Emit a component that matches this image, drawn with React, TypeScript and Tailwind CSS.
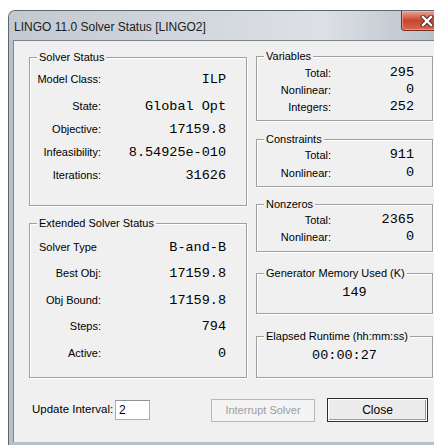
import type { ReactNode } from 'react';

const sans = "font-['Liberation_Sans',Arial,sans-serif]";
const mono = "font-['Liberation_Mono','Courier_New',monospace]";

type Row = { label: string; value: string; left?: boolean };

const solverRows: Row[] = [
    { label: 'Model Class:', value: 'ILP' },
    { label: 'State:', value: 'Global Opt' },
    { label: 'Objective:', value: '17159.8' },
    { label: 'Infeasibility:', value: '8.54925e-010' },
    { label: 'Iterations:', value: '31626' },
];

const extendedRows: Row[] = [
    { label: 'Solver Type', value: 'B-and-B', left: true },
    { label: 'Best Obj:', value: '17159.8' },
    { label: 'Obj Bound:', value: '17159.8' },
    { label: 'Steps:', value: '794' },
    { label: 'Active:', value: '0' },
];

// etched group box, same look as a win32 GROUPBOX
const Group = ({ title, className, children }: { title: string; className: string; children?: ReactNode }) => (
    <fieldset
        className={`border border-[#a0a0a0] shadow-[1px_1px_0_#ffffff,inset_1px_1px_0_#ffffff] ${className}`}
    >
        <legend className={`ml-[7px] px-[2px] bg-[#f0f0f0] text-[11px] leading-[12px] text-black whitespace-nowrap ${sans}`}>
            {title}
        </legend>
        {children}
    </fieldset>
);

const LeftRow = ({ row, h }: { row: Row; h: string }) => (
    <div className={`flex items-center pr-[20px] ${h}`}>
        <span
            className={`w-[71px] shrink-0 whitespace-nowrap text-[11px] leading-none text-black ${sans} ${row.left ? 'pl-[9px] text-left' : 'text-right'}`}
        >
            {row.label}
        </span>
        <span className={`flex-1 text-right whitespace-nowrap text-[13.5px] leading-none text-black ${mono}`}>{row.value}</span>
    </div>
);

const RightRow = ({ label, value, h }: { label: string; value: string; h: string }) => (
    <div className={`flex items-center pr-[18px] ${h}`}>
        <span className={`w-[74px] shrink-0 text-right whitespace-nowrap text-[11px] leading-none text-black ${sans}`}>{label}</span>
        <span className={`flex-1 text-right text-[13.5px] leading-none text-black ${mono}`}>{value}</span>
    </div>
);

const CloseGlyph = () => (
    <svg width="14" height="12" viewBox="0 0 14 12">
        <path d="M3 2 L11 10 M11 2 L3 10" stroke="#5a2a24" strokeWidth="4.4" strokeLinecap="square" />
        <path d="M3 2 L11 10 M11 2 L3 10" stroke="#ffffff" strokeWidth="2.4" strokeLinecap="square" />
    </svg>
);

export default function App() {
    return (
        <div className="w-[434px] h-[445px] overflow-hidden bg-white pt-[10px] pl-[8px]">
            <div className="w-[450px] h-[436px] flex flex-col rounded-tl-[7px] border-t border-l border-[#5d6670] bg-[#b8c0c9]">
                {/* caption */}
                <div className="h-[29px] flex items-start justify-between rounded-tl-[6px] bg-gradient-to-r from-[#c3c9d0] via-[#dde1e6] via-70% to-[#b3bac3]">
                    <span className={`pl-[5px] pt-[9px] text-[12px] leading-[14px] text-[#1b1b1b] ${sans}`}>
                        LINGO 11.0 Solver Status [LINGO2]
                    </span>
                    <div className="mr-[5px] w-[52px] h-[20px] flex items-center justify-center rounded-b-[4px] border border-t-0 border-[#7a2a20] bg-gradient-to-b from-[#e4a595] via-[#c9442f] to-[#d8674c] shadow-[inset_0_0_0_1px_rgba(255,200,190,0.5)]">
                        <CloseGlyph />
                    </div>
                </div>

                <div className="flex-1 flex pl-[4px]">
                    {/* client area */}
                    <div className="flex-1 h-[402px] flex flex-col border-t border-l border-[#7b848d] bg-[#f0f0f0]">
                        <div className="flex pl-[15px] pt-[9px]">
                            <div className="w-[218px] mt-[1px] flex flex-col">
                                <Group title="Solver Status" className="h-[155px] pt-[5px]">
                                    {solverRows.map((r, i) => (
                                        <LeftRow key={r.label} row={r} h={i === 1 ? 'h-[23px] mt-[4px]' : 'h-[23px]'} />
                                    ))}
                                </Group>
                                <Group title="Extended Solver Status" className="h-[161px] mt-[11px] pt-[5px]">
                                    {extendedRows.map((r) => (
                                        <LeftRow key={r.label} row={r} h="h-[26.5px]" />
                                    ))}
                                </Group>
                            </div>

                            <div className="w-[177px] ml-[9px] flex flex-col">
                                <Group title="Variables" className="h-[71px] pt-[2.5px]">
                                    <RightRow label="Total:" value="295" h="h-[17px]" />
                                    <RightRow label="Nonlinear:" value="0" h="h-[17px]" />
                                    <RightRow label="Integers:" value="252" h="h-[17px]" />
                                </Group>
                                <Group title="Constraints" className="h-[54px] mt-[12px] pt-[1px]">
                                    <RightRow label="Total:" value="911" h="h-[18px]" />
                                    <RightRow label="Nonlinear:" value="0" h="h-[18px]" />
                                </Group>
                                <Group title="Nonzeros" className="h-[54px] mt-[11px] pt-[1.5px]">
                                    <RightRow label="Total:" value="2365" h="h-[17px]" />
                                    <RightRow label="Nonlinear:" value="0" h="h-[17px]" />
                                </Group>
                                <Group title="Generator Memory Used (K)" className="h-[47px] mt-[15px] pt-[4px]">
                                    <div className={`h-[20px] flex items-center justify-center pl-[20px] text-[13.5px] leading-none text-black ${mono}`}>
                                        149
                                    </div>
                                </Group>
                                <Group title="Elapsed Runtime (hh:mm:ss)" className="h-[48px] mt-[16px] pt-[4px]">
                                    <div className={`h-[20px] flex items-center justify-center text-[13.5px] leading-none text-black ${mono}`}>
                                        00:00:27
                                    </div>
                                </Group>
                            </div>
                        </div>

                        {/* footer */}
                        <div className="mt-[20px] h-[24px] flex items-center pl-[18px]">
                            <span className={`w-[83px] text-[11.5px] leading-none text-black ${sans}`}>Update Interval:</span>
                            <div className={`w-[35px] h-[20px] flex items-center pl-[3px] border border-[#abadb3] border-t-[#8e9198] bg-white text-[12px] leading-none text-black ${sans}`}>
                                2
                            </div>
                            <div className={`ml-[61px] w-[104px] h-[23px] flex items-center justify-center border border-[#b5b8bc] bg-[#f4f4f4] text-[11px] leading-none text-[#9d9d9d] ${sans}`}>
                                Interrupt Solver
                            </div>
                            <div className={`ml-[12px] w-[101px] h-[24px] flex items-center justify-center border border-[#2e2e2e] bg-[#ececec] shadow-[inset_0_0_0_1px_#ffffff,inset_-1px_-1px_0_1px_#9a9a9a] text-[12px] leading-none text-black ${sans}`}>
                                Close
                            </div>
                        </div>
                    </div>
                </div>
            </div>
        </div>
    );
}
